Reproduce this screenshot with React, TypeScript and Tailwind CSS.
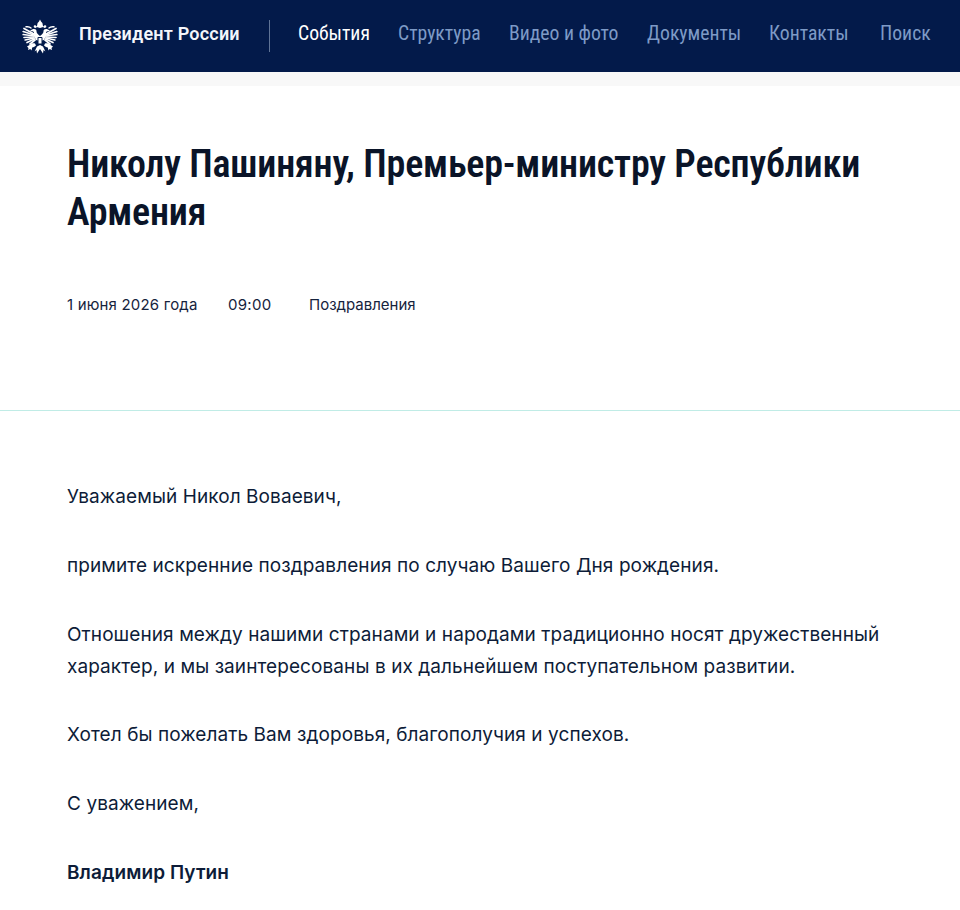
const Half = () => (
  <g>
    <g stroke="currentColor" strokeWidth="1.7" strokeLinecap="round" fill="none">
      <path d="M12 15 L2 9.500" />
      <path d="M12 16 L1.200 12.500" />
      <path d="M12 17 L1.200 15.500" />
      <path d="M12 18 L2 18.500" />
      <path d="M12 19 L3.200 21" />
      <path d="M12.500 20 L5 23.500" />
      <path d="M13 21 L8 25" />
      <path d="M4 7.800 C6 7.500 8 8 9 9" strokeWidth="1.400" />
    </g>
    <path d="M18 17 C15 15 14.500 13.500 14.500 12 C14.500 10.800 13.500 10 12 10 C10.800 10 9.500 10.500 8 12 L10.500 12.300 L12 13 L12 17 L14 21 L18 22 Z" fill="currentColor" />
    <path d="M18 30 L15 34.500 L14.500 31 L12.600 32.500 L15 27.500 L18 26 Z" fill="currentColor" />
    <path d="M13 24.500 C11 24 9 24.500 7.500 26 L5 27.500 L6.500 29 L6 31 L8.300 30 L9.500 31.500 L10.200 28.500 L12 28 L14 26.500 Z" fill="currentColor" />
    <path d="M18 0.500 L17 2.500 L15.600 4 L14.800 8 L18 9 Z" fill="currentColor" />
    <path d="M13 6 L11.600 7 L12 8.500 L14 9 L15 7.500 Z" fill="currentColor" />
  </g>
);

const Eagle = () => (
  <svg width="36" height="36" viewBox="0 0 36 36" className="text-white block">
    <Half />
    <g transform="translate(36 0) scale(-1 1)"><Half /></g>
    <rect x="15.500" y="18" width="5" height="7.500" rx="1" fill="#031a4a" />
    <rect x="16.500" y="19" width="3" height="5.500" fill="currentColor" />
    <rect x="17.500" y="9.500" width="1" height="6" fill="#031a4a" />
  </svg>
);

const items = [
  { t: "События", active: true, cls: "w-[100px]" },
  { t: "Структура", cls: "w-[111px]" },
  { t: "Видео и фото", cls: "w-[138px]" },
  { t: "Документы", cls: "w-[122px]" },
  { t: "Контакты", cls: "w-[111px]" },
  { t: "Поиск", cls: "" },
];

export default function App() {
  return (
    <div className="w-[960px] h-[910px] overflow-hidden bg-white text-[#0b1a33] font-['Inter','Liberation_Sans',sans-serif]">
      <header className="h-[72px] bg-[#031a4a] flex items-center">
        <div className="w-[79px] pl-[22px] pt-[1px] shrink-0"><Eagle /></div>
        <div className="w-[190px] shrink-0 pb-[5px] text-[18px] font-semibold tracking-[0.2px] text-[#f4f6fb] font-['Roboto',sans-serif]">Президент России</div>
        <div className="w-px h-[32px] bg-[#5f7396] mr-[28px]" />
        <nav className="flex items-center pb-[5px] font-['Roboto',sans-serif] text-[19.7px] [font-stretch:75%]">
          {items.map((i) => (
            <span key={i.t} className={`${i.cls} ${i.active ? "text-white" : "text-[#7e9ac6]"}`}>{i.t}</span>
          ))}
        </nav>
      </header>
      <div className="h-[14px] bg-[#f8f8f8]" />
      <main className="px-[67px] pt-[54px]">
        <h1 className="text-[38px] leading-[48px] font-semibold tracking-[-0.2px] [font-stretch:75%] text-[#0a1428] font-['Roboto',sans-serif]">
          Николу Пашиняну, Премьер-министру Республики Армения
        </h1>
      </main>
      <div className="px-[67px] mt-[59px] h-[20px] flex items-center text-[15px] text-[#16233d]">
        <span className="w-[161px] tracking-[0.18px]">1 июня 2026 года</span>
        <span className="w-[81px] tracking-[0.3px]">09:00</span>
        <span>Поздравления</span>
      </div>
      <div className="mt-[95px] h-px bg-[#c0ece6]" />
      <article className="px-[67px] pt-[70px] text-[19px] leading-[32px] tracking-[0.08px] text-[#0d1c38]">
        <p className="mb-[36.8px]">Уважаемый Никол Воваевич,</p>
        <p className="mb-[36.8px]">примите искренние поздравления по случаю Вашего Дня рождения.</p>
        <p className="mb-[36.8px]">Отношения между нашими странами и народами традиционно носят дружественный характер, и мы заинтересованы в их дальнейшем поступательном развитии.</p>
        <p className="mb-[36.8px]">Хотел бы пожелать Вам здоровья, благополучия и успехов.</p>
        <p className="mb-[36.4px]">С уважением,</p>
        <p className="font-semibold">Владимир Путин</p>
      </article>
    </div>
  );
}
